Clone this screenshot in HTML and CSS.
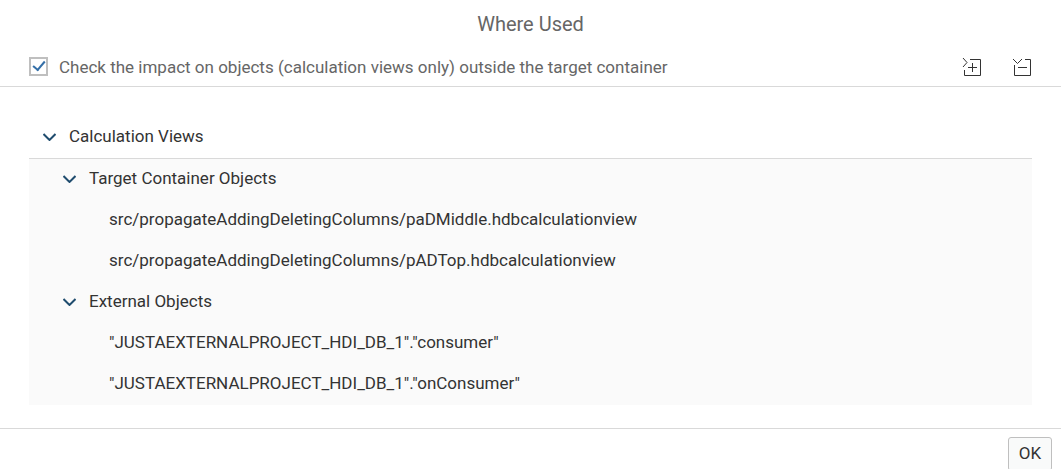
FILE: index.html
```html
<!DOCTYPE html>
<html lang="en">
<head>
<meta charset="utf-8">
<title>Where Used</title>
<link rel="stylesheet" href="styles.css">
</head>
<body>
<main class="dialog">
  <header class="title-bar"><h1 class="title">Where Used</h1></header>
  <div class="toolbar">
    <label class="option"><input class="check" type="checkbox" checked><span>Check the impact on objects (calculation views only) outside the target container</span></label>
    <div class="actions">
      <button class="icon-button" type="button" aria-label="Expand all"><svg width="20" height="20" viewBox="0 0 20 20"><path d="M1 1l4 4.500-4 4.500M8 2.500h10.500v16h-16V13M6 10.500h9M10.500 6v9"/></svg></button>
      <button class="icon-button" type="button" aria-label="Collapse all"><svg width="20" height="20" viewBox="0 0 20 20"><path d="M1 2l4.500 4.500L10 2M13 2.500h5.500v16h-16V8M6 10.500h9"/></svg></button>
    </div>
  </div>
  <section class="content">
    <div class="row group"><button class="toggle" type="button" aria-label="Collapse Calculation Views"><svg width="13" height="8" viewBox="0 0 13 8"><path d="M.5 1l6 6 6-6"/></svg></button><span>Calculation Views</span></div>
    <div class="tree">
      <div class="row level-1"><button class="toggle" type="button" aria-label="Collapse Target Container Objects"><svg width="13" height="8" viewBox="0 0 13 8"><path d="M.5 1l6 6 6-6"/></svg></button><span>Target Container Objects</span></div>
      <div class="row level-2">src/propagateAddingDeletingColumns/paDMiddle.hdbcalculationview</div>
      <div class="row level-2">src/propagateAddingDeletingColumns/pADTop.hdbcalculationview</div>
      <div class="row level-1"><button class="toggle" type="button" aria-label="Collapse External Objects"><svg width="13" height="8" viewBox="0 0 13 8"><path d="M.5 1l6 6 6-6"/></svg></button><span>External Objects</span></div>
      <div class="row level-2">"JUSTAEXTERNALPROJECT_HDI_DB_1"."consumer"</div>
      <div class="row level-2">"JUSTAEXTERNALPROJECT_HDI_DB_1"."onConsumer"</div>
    </div>
  </section>
  <footer class="footer"><button class="ok" type="button">OK</button></footer>
</main>
</body>
</html>
```
FILE: styles.css
```css
* { box-sizing: border-box; }
body { margin: 0; background: #fff; color: #333; font: 17px/20px Roboto, "Liberation Sans", sans-serif; overflow: hidden; }
button { font: inherit; padding: 0; border: 0; background: none; }
svg { display: block; fill: none; stroke: currentColor; }
.title-bar { display: flex; justify-content: center; align-items: center; height: 47px; color: #666; }
.title { margin: 0; font-size: 20px; line-height: 24px; font-weight: 400; }
.toolbar { display: flex; justify-content: space-between; align-items: center; height: 40px; padding: 0 29px; border-bottom: 1px solid #d9d9d9; }
.option { display: flex; align-items: center; gap: 11px; color: #666; }
.check { appearance: none; width: 19px; height: 19px; margin: 0; border: 2px solid #bfbfbf; background: #fff; display: grid; place-items: center; }
.check:checked::before { content: ""; width: 10px; height: 5px; border: solid #346fa8; border-width: 0 0 2px 2px; transform: translateY(-2px) rotate(-50deg); }
.actions { display: flex; gap: 30px; }
.icon-button { color: #333; }
.content { padding: 30px 29px 23px; }
.row { display: flex; align-items: center; height: 41px; padding-bottom: 3px; }
.group { height: 42px; padding-left: 14px; border-bottom: 1px solid #d9d9d9; }
.toggle { margin: 2px 13px 0 0; color: #1f4c6e; }
.toggle path { stroke-width: 2; }
.tree { background: #fafafa; }
.level-1 { padding-left: 34px; }
.level-2 { padding-left: 80px; }
.footer { display: flex; justify-content: flex-end; padding: 8px 9px 0; border-top: 1px solid #d9d9d9; }
.ok { width: 44px; height: 34px; border: 1px solid #bfbfbf; border-radius: 3px; background: #f9fafa; color: #333; padding-bottom: 2px; }
```
